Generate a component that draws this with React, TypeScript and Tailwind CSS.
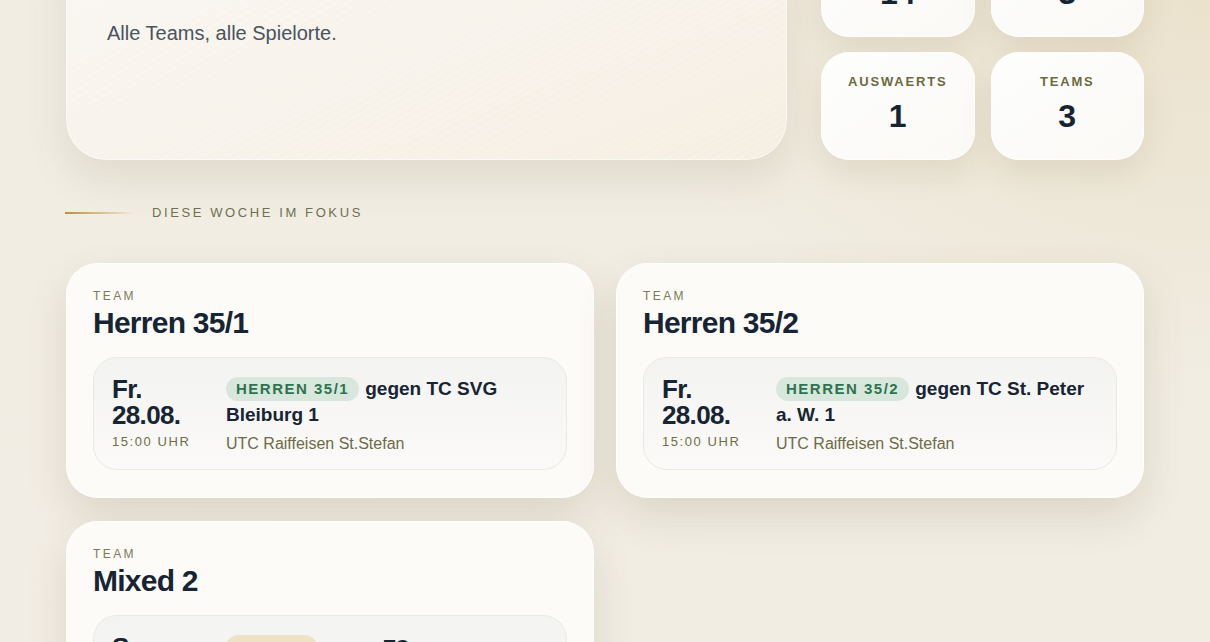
import type { ReactNode } from "react";

// Week overview: summary hero + stat tiles, then one card per team with its
// next fixture.

type Stat = { label: string; value: number };

type Fixture = {
  team: string;
  day: string;
  date: string;
  time: string;
  opponent: string;
  venue: string;
  tone: "green" | "gold";
};

const STATS: Stat[] = [
  { label: "Spiele", value: 14 },
  { label: "Heim", value: 3 },
  { label: "Auswaerts", value: 1 },
  { label: "Teams", value: 3 },
];

const FIXTURES: Fixture[] = [
  {
    team: "Herren 35/1",
    day: "Fr.",
    date: "28.08.",
    time: "15:00 Uhr",
    opponent: "gegen TC SVG Bleiburg 1",
    venue: "UTC Raiffeisen St.Stefan",
    tone: "green",
  },
  {
    team: "Herren 35/2",
    day: "Fr.",
    date: "28.08.",
    time: "15:00 Uhr",
    opponent: "gegen TC St. Peter a. W. 1",
    venue: "UTC Raiffeisen St.Stefan",
    tone: "green",
  },
  {
    team: "Mixed 2",
    day: "Sa.",
    date: "29.08.",
    time: "14:00 Uhr",
    // non-breaking hyphen keeps the club name on one line
    opponent: "gegen TC Lavanttal\u2011Wolfsberg 1",
    venue: "TC Wolfsberg",
    tone: "gold",
  },
];

const badgeTone = {
  green: "bg-[#d8e7dc] text-[#2e7350]",
  gold: "bg-[#ede3c4] text-[#8a7430]",
};

function StatTile({ stat }: { stat: Stat }) {
  return (
    <div className="flex h-[108px] flex-col items-center rounded-[28px] bg-gradient-to-br from-[#fefefd] to-[#faf9f6] pt-[22px] shadow-[0_14px_30px_rgba(120,100,60,0.12),inset_0_0_0_1px_rgba(255,255,255,0.7)]">
      <span className="text-[13px] font-bold uppercase leading-4 tracking-[0.14em] text-[#6b6a3e]">
        {stat.label}
      </span>
      <span className="mt-[8px] text-[32px] font-bold leading-9 text-[#172433]">
        {stat.value}
      </span>
    </div>
  );
}

function SectionLabel({ children }: { children: ReactNode }) {
  return (
    <div className="flex items-center gap-[17px]">
      <span className="-ml-px h-[2px] w-[70px] bg-gradient-to-r from-[#b8962e] to-transparent" />
      <span className="text-[13px] uppercase leading-4 tracking-[0.2em] text-[#6f7050]">
        {children}
      </span>
    </div>
  );
}

function FixtureCard({ f }: { f: Fixture }) {
  return (
    <article className="rounded-[32px] bg-[#fcfbf8] px-[27px] pb-[28px] pt-[25px] shadow-[0_18px_40px_rgba(110,95,60,0.16),inset_0_0_0_1px_rgba(255,255,255,0.7)]">
      <div className="text-[12px] uppercase leading-4 tracking-[0.2em] text-[#7b7a5a]">
        Team
      </div>
      <h3 className="mt-[1px] text-[30px] font-bold leading-9 tracking-tight text-[#172433]">
        {f.team}
      </h3>

      <div className="mt-[16px] flex rounded-[24px] border border-[#ebe9e3] bg-gradient-to-b from-[#f3f3f1] to-[#fbfaf8] px-[18px] pb-[14px] pt-[18px]">
        <div className="w-[114px] shrink-0">
          <div className="text-[26px] font-bold leading-[26px] tracking-tight text-[#172433]">
            {f.day}
            <br />
            {f.date}
          </div>
          <div className="mt-[5px] text-[13px] uppercase leading-[18px] tracking-[0.12em] text-[#6f6d48]">
            {f.time}
          </div>
        </div>
        <div className="min-w-0 flex-1">
          <p className="text-[19px] font-bold leading-[26px] text-[#172433]">
            <span
              className={
                "mr-[6px] inline-block rounded-full px-[10px] align-[1px] text-[15px] uppercase leading-6 tracking-[0.1em] " +
                badgeTone[f.tone]
              }
            >
              {f.team}
            </span>
            {f.opponent}
          </p>
          <p className="mt-[5px] text-[16px] leading-[22px] text-[#6d6b46]">
            {f.venue}
          </p>
        </div>
      </div>
    </article>
  );
}

export default function App() {
  return (
    <div className="min-h-screen overflow-hidden bg-[#f1ede3] bg-[radial-gradient(ellipse_at_100%_0%,#ebe2cd_0%,transparent_35%),radial-gradient(ellipse_at_0%_100%,#f3eee5_0%,transparent_50%)] pb-16 font-['Liberation_Sans',Arial,sans-serif]">
      <main className="mx-auto -mt-[71px] w-[1078px]">
        <section className="grid grid-cols-[721px_1fr] gap-[34px]">
          <div className="rounded-[40px] bg-[#f8f5ee] bg-[repeating-linear-gradient(150deg,rgba(255,255,255,0.12)_0px,rgba(255,255,255,0.12)_2px,transparent_2px,transparent_6px),linear-gradient(160deg,#faf8f3,#f5eee2)] px-[41px] pt-[90px] shadow-[0_18px_40px_rgba(110,95,60,0.13),inset_0_0_0_1px_rgba(255,255,255,0.6)]">
            <p className="text-[20px] leading-7 text-[#4a5360]">
              Alle Teams, alle Spielorte.
            </p>
          </div>
          <div className="grid grid-cols-2 gap-x-4 gap-y-[15px]">
            {STATS.map((s) => (
              <StatTile key={s.label} stat={s} />
            ))}
          </div>
        </section>

        <div className="mt-[45px]">
          <SectionLabel>Diese Woche im Fokus</SectionLabel>
        </div>

        <section className="mt-[42px] grid grid-cols-2 gap-x-[22px] gap-y-[23px]">
          {FIXTURES.map((f) => (
            <FixtureCard key={f.team} f={f} />
          ))}
        </section>
      </main>
    </div>
  );
}
